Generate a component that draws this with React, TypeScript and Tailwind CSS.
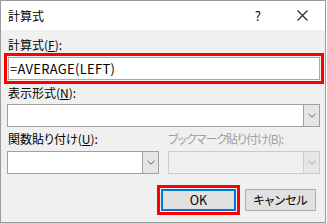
import React from 'react';

const font = {
  fontFamily: '"Noto Sans CJK JP", "Noto Sans", sans-serif',
  fontFeatureSettings: '"palt"',
};

function Chevron({ color = '#606060' }: { color?: string }) {
  return (
    <svg width="8" height="5" viewBox="0 0 8 5" fill="none" stroke={color} strokeWidth="1">
      <polyline points="0.5,0.8 4,4.2 7.5,0.8" />
    </svg>
  );
}

function Select({ width, disabled }: { width: string; disabled?: boolean }) {
  return (
    <div
      className={`flex h-[23px] ${width} border ${
        disabled ? 'border-[#cccccc] bg-[#f0f0f0]' : 'border-[#a0a0a0] bg-white'
      }`}
    >
      <div className="flex-1" />
      <div
        className={`flex w-[16px] items-center justify-center border-l ${
          disabled ? 'border-[#cccccc] bg-[#e6e6e6]' : 'border-[#a0a0a0] bg-[#e5e5e5]'
        }`}
      >
        <Chevron color={disabled ? '#a0a0a0' : '#606060'} />
      </div>
    </div>
  );
}

export default function App() {
  return (
    <div className="h-[223px] w-[327px] bg-white" style={font}>
      <div className="flex h-[223px] w-[326px] flex-col border border-[#9a9a9a] text-[12px] text-black">
        {/* Title bar */}
        <div className="flex h-[29px] items-center bg-white pl-[7px]">
          <span className="leading-none">計算式</span>
          <span className="ml-auto mr-[36px] text-[13px] leading-none">?</span>
          <svg className="mr-[17px]" width="11" height="11" viewBox="0 0 11 11" stroke="#222" strokeWidth="1.1">
            <line x1="0.5" y1="0.5" x2="10.5" y2="10.5" />
            <line x1="10.5" y1="0.5" x2="0.5" y2="10.5" />
          </svg>
        </div>

        {/* Body */}
        <div className="flex flex-1 flex-col bg-[#f0f0f0] pl-[6px] pt-[7px]">
          <div className="h-[16px] pl-[1px] leading-[16px]">
            計算式(<span className="underline">F</span>):
          </div>
          <div className="-ml-[3px] h-[31px] w-[320px] border-[3px] border-[#ff0000] bg-[#f0f0f0] p-[1px]">
            <div className="flex h-full items-center border border-[#a8a8a8] bg-white pl-[1px] text-[13px] tracking-[0.3px]">
              =AVERAGE(LEFT)
            </div>
          </div>

          <div className="mt-[1px] h-[16px] pl-[1px] leading-[16px]">
            表示形式(<span className="underline">N</span>):
          </div>
          <div className="mt-[3px]">
            <Select width="w-[313px]" />
          </div>

          <div className="mt-[4px] flex h-[16px] leading-[16px]">
            <div className="w-[161px] pl-[1px]">
              関数貼り付け(<span className="underline">U</span>):
            </div>
            <div className="tracking-[-1px] text-[#a0a0a0]">ブックマーク貼り付け(B):</div>
          </div>
          <div className="mt-[4px] flex gap-[9px]">
            <Select width="w-[152px]" />
            <Select width="w-[152px]" disabled />
          </div>

          <div className="mt-[11px] flex items-center">
            <div className="ml-[150px] h-[30px] w-[83px] border-[3px] border-[#ff0000] bg-[#f0f0f0] p-[1px]">
              <div className="flex h-full items-center justify-center border-2 border-[#0078d7] bg-[#e1e1e1] text-[12.5px]">
                OK
              </div>
            </div>
            <div className="ml-[5px] flex h-[22px] w-[71px] items-center justify-center border border-[#adadad] bg-[#e1e1e1]">
              キャンセル
            </div>
          </div>
        </div>
      </div>
    </div>
  );
}
